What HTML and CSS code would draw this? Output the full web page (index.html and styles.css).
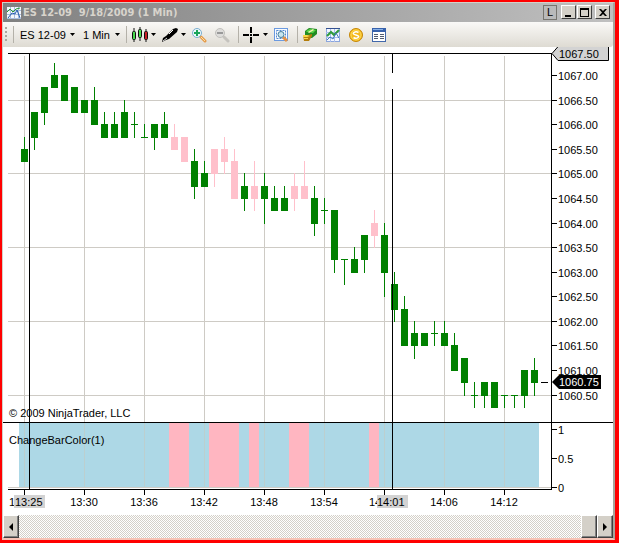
FILE: index.html
```html
<!DOCTYPE html>
<html lang="en">
<head>
<meta charset="utf-8">
<title>ES 12-09 9/18/2009 (1 Min)</title>
<link rel="stylesheet" href="styles.css">
</head>
<body>
<main class="window">
  <header class="titlebar">
    <svg class="app-icon" viewBox="0 0 14 14" aria-hidden="true">
      <path fill="#f4f7fc" d="M0 1h14v12H0z"/>
      <path stroke="#a9bddd" d="M3.500 1v12M7.500 1v12M11.500 1v12M0 4.500h14M0 8.500h14M0 12.500h14"/>
      <path fill="none" stroke="#279a35" d="M0 6l3-3 3 3 3-3 4-1"/>
      <path fill="none" stroke="#245cae" d="M1 12l4-5 3 1 2-4 3 8"/>
    </svg>
    <h1 class="title">ES 12-09&nbsp; 9/18/2009 (1 Min)</h1>
    <div class="window-buttons">
      <button class="link-button" aria-label="Link">L</button>
      <button class="win-button" aria-label="Minimize"><svg viewBox="0 0 11 11"><path d="M2 8h6v2H2z"/></svg></button>
      <button class="win-button" aria-label="Maximize"><svg viewBox="0 0 11 11"><path fill-rule="evenodd" d="M1 1h9v9H1zM2 3v6h7V3z"/></svg></button>
      <button class="win-button close" aria-label="Close"><svg viewBox="0 0 11 11"><path d="M2 2h2l2 2 2-2h2L7 5.500 10 9H8L6 7 4 9H2l3-3.500z"/></svg></button>
    </div>
  </header>

  <nav class="toolbar" aria-label="Chart tools">
    <span class="grip"></span>
    <span class="separator first"></span>
    <span class="combo symbol"><select aria-label="Instrument"><option>ES 12-09</option></select><i class="caret"></i></span>
    <span class="combo interval"><select aria-label="Interval"><option>1 Min</option></select><i class="caret"></i></span>
    <span class="separator first"></span>
    <button class="tool menu" aria-label="Chart style">
      <svg class="icon wide" viewBox="0 0 18 16"><path stroke="#111" d="M3 1v14M9 0v14M15 2v13"/><g stroke="#111"><rect x="1.500" y="4.500" width="3" height="8" rx="1" fill="#49d94e"/><rect x="7.500" y="2.500" width="3" height="8" rx="1" fill="#49d94e"/><rect x="13.500" y="4.500" width="3" height="8" rx="1" fill="#c71d25"/></g></svg><i class="caret"></i>
    </button>
    <button class="tool menu" aria-label="Drawing tools">
      <svg class="icon wide" viewBox="0 0 18 16"><path d="M1 15l1-4 3-2 7-7 3-1 2 1-1 3-8 7-3 1-2 1z"/><path fill="none" stroke="#fff" d="M8 7l4-4"/><path stroke="#ddd" d="M2 14l4-3"/></svg><i class="caret"></i>
    </button>
    <button class="tool" aria-label="Zoom in">
      <svg class="icon" viewBox="0 0 16 16"><path stroke="#e59a48" stroke-width="3" stroke-linecap="round" d="M10 10l4 4"/><path stroke="#ffe0a2" d="M10 10l4 4"/><circle cx="6" cy="6" r="4.500" fill="#ecf8fa" stroke="#7aaed0"/><path stroke="#19a55b" stroke-width="2" d="M3 6h6M6 3v6"/></svg>
    </button>
    <button class="tool" aria-label="Zoom out">
      <svg class="icon" viewBox="0 0 16 16"><path stroke="#c5c3be" stroke-width="3" stroke-linecap="round" d="M10 10l4 4"/><circle cx="6" cy="6" r="4.500" fill="#dedddb" stroke="#c1c0bc"/><path stroke="#999" stroke-width="2" d="M3 6h6"/></svg>
    </button>
    <span class="separator"></span>
    <button class="tool menu" aria-label="Crosshair">
      <svg class="icon wide" viewBox="0 0 18 16"><path stroke="#000" stroke-width="2" d="M0 8h6M10 8h6M8 0v6M8 10v6"/><path d="M7 7h2v2H7z"/></svg><i class="caret"></i>
    </button>
    <button class="tool" aria-label="Zoom to frame">
      <svg class="icon" viewBox="0 0 16 16"><rect x="1.500" y="1.500" width="13" height="12" fill="#f8fbff" stroke="#6b9ae0"/><path fill="none" stroke="#5389cf" stroke-dasharray="2 1" d="M3.500 3.500h9v8h-9z"/><path stroke="#e59346" stroke-width="3" d="M10 10l4 4"/><circle cx="8" cy="7.500" r="3" fill="#c7e5ef" stroke="#447d9c"/></svg>
    </button>
    <span class="separator"></span>
    <button class="tool" aria-label="Chart trader">
      <svg class="icon" viewBox="0 0 16 16"><path fill="#218c23" d="M3 4l4-3 8 1v5l-5 4-7-1z"/><path fill="#58d648" d="M4 4l4-2 6 1-3 3-6-1z"/><path fill="#f6f4b0" d="M6 5l5-3 1 1-5 3z"/><path fill="#b47d0b" d="M1 8h5l4-1v2l-3 5H2z"/><path fill="#f8d849" d="M1 8h4l3 1-3 1H1zM2 11h4v1H2z"/></svg>
    </button>
    <button class="tool" aria-label="Indicators">
      <svg class="icon" viewBox="0 0 16 16"><rect x="1.500" y="1.500" width="13" height="13" fill="#f5f8ff" stroke="#8ba6dc"/><path stroke="#a9bdf0" d="M5.500 1v14M9.500 1v14M1 5.500h14M1 10.500h14"/><path stroke="#335191" d="M1 1.500h14"/><path fill="none" stroke="#2f9b3a" stroke-width="2" d="M2 9l4-4 3 3 5-5"/><path fill="none" stroke="#4278b6" d="M2 13l3-3 3 2 3-6 3 5"/></svg>
    </button>
    <button class="tool" aria-label="Strategies">
      <svg class="icon" viewBox="0 0 16 16"><circle cx="8" cy="8" r="6.500" fill="#f4b91c" stroke="#c58608"/><circle cx="8" cy="8" r="5" fill="none" stroke="#ffdc59"/><path fill="none" stroke="#fff" stroke-width="1.500" d="M10.500 5.500Q8 4 6 5.500T8 8T10 10.500Q8 12 5.500 10.500"/></svg>
    </button>
    <button class="tool" aria-label="Properties">
      <svg class="icon" viewBox="0 0 16 16"><rect x="1.500" y="2.500" width="13" height="12" fill="#fff" stroke="#4268aa"/><path fill="#3862ac" d="M1 1h14v4H1z"/><path fill="#89b2e7" d="M2 2h10v1H2z"/><path stroke="#525c70" d="M3 7.500h4M9 7.500h4M3 9.500h4M9 9.500h4M3 11.500h4M9 11.500h4"/></svg>
    </button>
  </nav>

  <svg class="chart" id="chart" viewBox="3 47 610 468" role="img" aria-label="ES 12-09 one minute candlestick chart">
    <g id="grid"></g>
    <g id="panel"></g>
    <g id="candles"></g>
    <path class="axis" d="M8 53.500h544M551.500 53v437M8 489.500h544M3 422.500h610M29.500 54v435M392.500 54v19M392.500 89v400M541 382.500h7"/>
    <g id="axes"></g>
    <path class="marker" d="M552 53.500l7-8h49.500v15H558z"/>
    <text x="559" y="58">1067.50</text>
    <path d="M552 382l7-7h42v14h-42z"/>
    <text class="inverse" x="559" y="386">1060.75</text>
    <text x="9" y="417">© 2009 NinjaTrader, LLC</text>
    <text x="9" y="444">ChangeBarColor(1)</text>
    <text x="9" y="506">1</text>
    <text x="369" y="506">14</text>
    <path class="time-mark" d="M14 495h31v13H14zM377 495h31v13h-31z"/>
    <text x="15" y="506">13:25</text>
    <text x="377" y="506">14:01</text>
  </svg>

  <footer class="scrollbar">
    <button class="scroll-button" aria-label="Scroll left"><svg viewBox="0 0 8 8"><path d="M6 0v8L2 4z"/></svg></button>
    <span class="track"></span>
    <button class="scroll-button" aria-label="Scroll position"></button>
    <button class="scroll-button" aria-label="Scroll right"><svg viewBox="0 0 8 8"><path d="M2 0v8l4-4z"/></svg></button>
  </footer>
</main>
<script src="chart.js"></script>
</body>
</html>
```
FILE: styles.css
```css
* {
  box-sizing: border-box;
}

body {
  margin: 0;
  background: #f00;
  font-family: "Liberation Sans", Arial, sans-serif;
  font-size: 11px;
  color: #000;
}

button,
select {
  margin: 0;
  padding: 0;
  border: 0;
  background: none;
  font: inherit;
  color: inherit;
}

.window {
  display: flex;
  flex-direction: column;
  margin: 2px 4px 3px 2px;
  border: 1px solid #d4d0c8;
  border-right: 2px solid #a8a49c;
  border-bottom: 2px solid #f7c3b5;
  background: #fff;
}

.titlebar {
  display: flex;
  align-items: center;
  gap: 2px;
  height: 19px;
  padding: 0 3px 0 4px;
  background: linear-gradient(90deg, #808080, #c0c0c0);
}

.app-icon {
  width: 14px;
  height: 14px;
}

.title {
  flex: 1;
  margin: 0;
  font-family: "DejaVu Sans Condensed", "DejaVu Sans", sans-serif;
  font-size: 11px;
  font-weight: bold;
  color: #d8d4cc;
}

.window-buttons {
  display: flex;
  gap: 1px;
}

.link-button {
  width: 14px;
  height: 15px;
  margin-right: 3px;
  border: 1px solid #77756f;
  line-height: 13px;
}

.win-button {
  display: grid;
  place-items: center;
  width: 15px;
  height: 14px;
  border: 1px solid;
  border-color: #fff #404040 #404040 #fff;
  background: #d4d0c8;
}

.win-button svg {
  width: 11px;
  height: 11px;
}

.close {
  margin-left: 2px;
}

.toolbar {
  display: flex;
  align-items: center;
  height: 25px;
  padding-left: 2px;
  border-radius: 0 0 3px 0;
  background: linear-gradient(#faf9f7, #dedbd3);
}

.grip {
  width: 2px;
  height: 15px;
  background: repeating-linear-gradient(#aaa89f 0 2px, transparent 2px 4px);
}

.separator {
  width: 1px;
  height: 17px;
  margin: 0 4px 0 1px;
  background: #b4b1a9;
}

.separator.first {
  margin-left: 6px;
}

.combo {
  display: flex;
  align-items: center;
  margin-left: 2px;
}

.combo select {
  appearance: none;
}

.symbol select {
  width: 50px;
}

.interval {
  margin-left: 8px;
}

.interval select {
  width: 32px;
}

.caret {
  width: 5px;
  height: 3px;
  background: #000;
  clip-path: polygon(0 0, 100% 0, 50% 100%);
}

.tool {
  display: flex;
  align-items: center;
  width: 23px;
  height: 21px;
}

.tool.menu {
  width: 30px;
  gap: 2px;
}

.icon {
  width: 16px;
  height: 16px;
}

.icon.wide {
  width: 18px;
}

.chart {
  display: block;
  width: 100%;
  height: auto;
  overflow: hidden;
}

.chart text {
  font-size: 11px;
}

.chart .inverse {
  fill: #fff;
}

.grid-line {
  fill: none;
  stroke: #cecbc5;
}

.axis {
  fill: none;
  stroke: #000;
}

.marker {
  fill: #d3d3d3;
  stroke: #000;
}

.time-mark {
  fill: #d3d3d3;
}

.up {
  fill: #008000;
}

.changed {
  fill: #ffc0cb;
}

.panel-up {
  fill: #add8e6;
}

.panel-changed {
  fill: #ffb6c1;
}

.panel-grid {
  fill: #bccfcf;
}

.scrollbar {
  display: flex;
  height: 23px;
}

.track {
  flex: 1;
  background: repeating-conic-gradient(#fff 0 25%, #d4d0c8 0 50%) 0 0 / 2px 2px;
}

.scroll-button {
  display: grid;
  place-items: center;
  width: 16px;
  border: 1px solid;
  border-color: #fff #404040 #404040 #fff;
  background: #d4d0c8;
  box-shadow: inset -1px -1px #808080;
}

.scroll-button svg {
  width: 8px;
  height: 8px;
}
```
FILE: chart.js
```javascript
// Each bar: [body top, body bottom, high, low, changed], in ticks below 1066.50.
const bars = [
  [4,5,3,5],[1,3,1,4],[-1,1,-1,2],[-2,-1,-3,-1],[-2,0,-2,0],[-1,1,-1,1],[0,1,0,1],[0,2,-1,2],
  [2,3,1,3],[2,3,1,3],[1,3,0,3],[2,2,1,3],[3,3,2,3],[2,3,2,4],[2,3,1,3],[3,4,2,4,1],
  [3,5,3,5,1],[5,7,4,8],[6,7,5,7],[4,6,4,7,1],[4,5,3,6,1],[5,8,4,8,1],[7,8,6,9],[7,8,5,9,1],
  [7,8,6,10],[8,9,7,9],[8,9,7,9],[7,8,6,9,1],[7,8,5,8,1],[8,10,7,11],[9,9,8,10],[9,13,9,14],
  [13,13,13,15],[13,14,12,14],[11,13,11,14],[10,11,9,12,1],[11,14,10,16],[15,17,14,18],
  [17,20,16,20],[19,20,18,21],[19,20,19,20],[19,19,18,20],[19,20,18,20],[20,22,19,22],
  [21,23,21,24],[24,24,23,25],[23,24,23,25],[23,25,23,25],[24,24,24,25],[24,24,24,25],
  [22,24,22,25],[22,23,21,24]
];
const times = ["", "13:30", "13:36", "13:42", "13:48", "13:54", "", "14:06", "14:12"];
const ns = "http://www.w3.org/2000/svg";
const tickY = t => Math.floor(100.2 + 12.285 * t);

function add(parent, tag, attrs, text) {
  const el = document.createElementNS(ns, tag);
  for (const key in attrs) el.setAttribute(key, attrs[key]);
  if (text) el.textContent = text;
  document.getElementById(parent).appendChild(el);
}
function rect(parent, cls, x, y, width, height) {
  add(parent, "rect", { class: cls, x, y, width, height });
}

for (let t = 0; t <= 24; t += 6) {
  add("grid", "path", { class: "grid-line", d: `M8 ${tickY(t) + 0.5}H551` });
}
add("grid", "path", { class: "grid-line", d: "M8 487.5H551" });

bars.forEach(([top, bottom, high, low, changed], i) => {
  const cls = changed ? "changed" : "up";
  const x = 24 + i * 10;
  rect("panel", changed ? "panel-changed" : "panel-up", x - 5, 423, 10, 64);
  rect("candles", cls, x, tickY(high), 1, tickY(low) - tickY(high) + 1);
  rect("candles", cls, x - 3, tickY(top), 7, tickY(bottom) - tickY(top) + 1);
});

times.forEach((label, i) => {
  const x = 24 + i * 60;
  add("grid", "path", { class: "grid-line", d: `M${x + 0.5} 56V422` });
  rect("panel", "panel-grid", x, 423, 1, 64);
  add("axes", "path", { class: "axis", d: `M${x + 0.5} 490v5` });
  if (label) add("axes", "text", { x: x, y: 506, "text-anchor": "middle" }, label);
});

for (let t = -2; t <= 24; t += 2) {
  const y = tickY(t);
  add("axes", "path", { class: "axis", d: `M552 ${y + 0.5}h5` });
  add("axes", "text", { x: 558, y: y + 5 }, (1066.5 - t / 4).toFixed(2));
}
[["1", 429], ["0.5", 458], ["0", 487]].forEach(([label, y]) => {
  add("axes", "path", { class: "axis", d: `M552 ${y + 0.5}h5` });
  add("axes", "text", { x: 558, y: y + 5 }, label);
});
```
